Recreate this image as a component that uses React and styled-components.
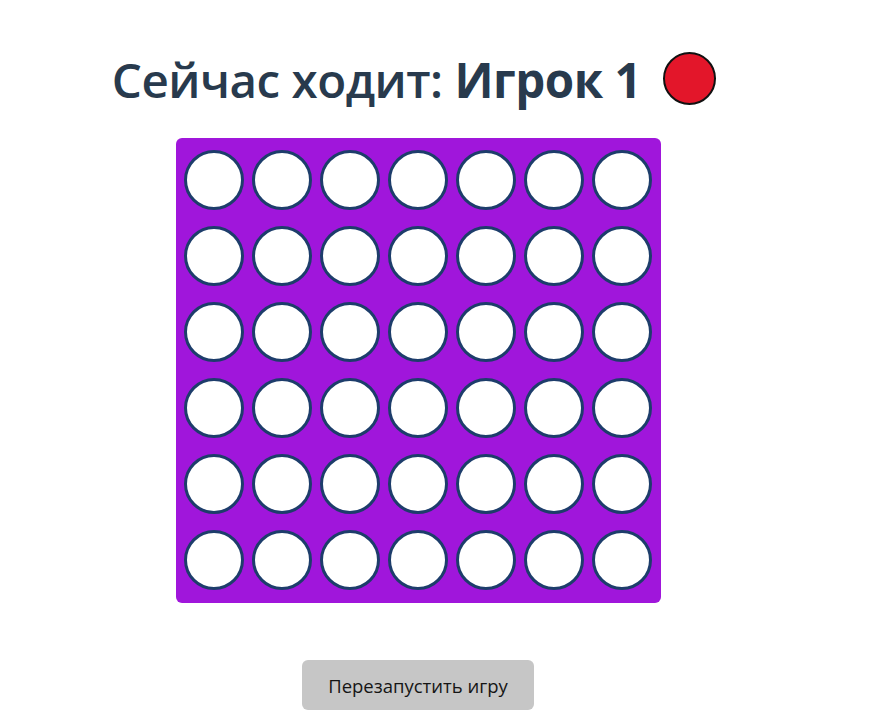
import styled, { createGlobalStyle } from 'styled-components';

const GlobalStyle = createGlobalStyle`
  body {
    margin: 0;
    background: #ffffff;
    font-family: "Open Sans", "Liberation Sans", sans-serif;
  }
`;

const Page = styled.div`
  width: 836px;
  display: flex;
  flex-direction: column;
  align-items: center;
  padding-top: 47px;
`;

const Heading = styled.h1`
  margin: 0 0 0 -8px;
  display: flex;
  align-items: center;
  gap: 22px;
  font-size: 47.5px;
  font-weight: 600;
  color: #283a4d;
  letter-spacing: -0.5px;
`;

const Player = styled.span`
  font-weight: 700;
`;

const Token = styled.div`
  width: 53px;
  height: 53px;
  border-radius: 50%;
  background: ${(p) => p.color};
  border: 2.5px solid #111;
  box-sizing: border-box;
  margin-top: -2px;
`;

const Board = styled.div`
  margin-top: 26px;
  display: grid;
  grid-template-columns: repeat(7, 60px);
  grid-auto-rows: 60px;
  column-gap: 8px;
  row-gap: 16px;
  padding: 12px 9px 13px 8px;
  background: #a016db;
  border-radius: 6px;
`;

const Cell = styled.div`
  width: 60px;
  height: 60px;
  border-radius: 50%;
  box-sizing: border-box;
  border: 3px solid #1d3d6b;
  background: ${(p) => p.fill || '#ffffff'};
`;

const RestartButton = styled.button`
  margin-top: 57px;
  width: 232px;
  height: 50px;
  border: none;
  border-radius: 6px;
  background: #c6c6c6;
  color: #151515;
  font-family: "Open Sans", "Liberation Sans", sans-serif;
  font-size: 18.5px;
  cursor: pointer;
`;

const ROWS = 6;
const COLS = 7;

export default function App() {
  const cells = Array.from({ length: ROWS * COLS });
  return (
    <>
      <GlobalStyle />
      <Page>
        <Heading>
          <span>
            Сейчас ходит: <Player>Игрок 1</Player>
          </span>
          <Token color="#e3162a" />
        </Heading>
        <Board>
          {cells.map((_, i) => (
            <Cell key={i} />
          ))}
        </Board>
        <RestartButton>Перезапустить игру</RestartButton>
      </Page>
    </>
  );
}
